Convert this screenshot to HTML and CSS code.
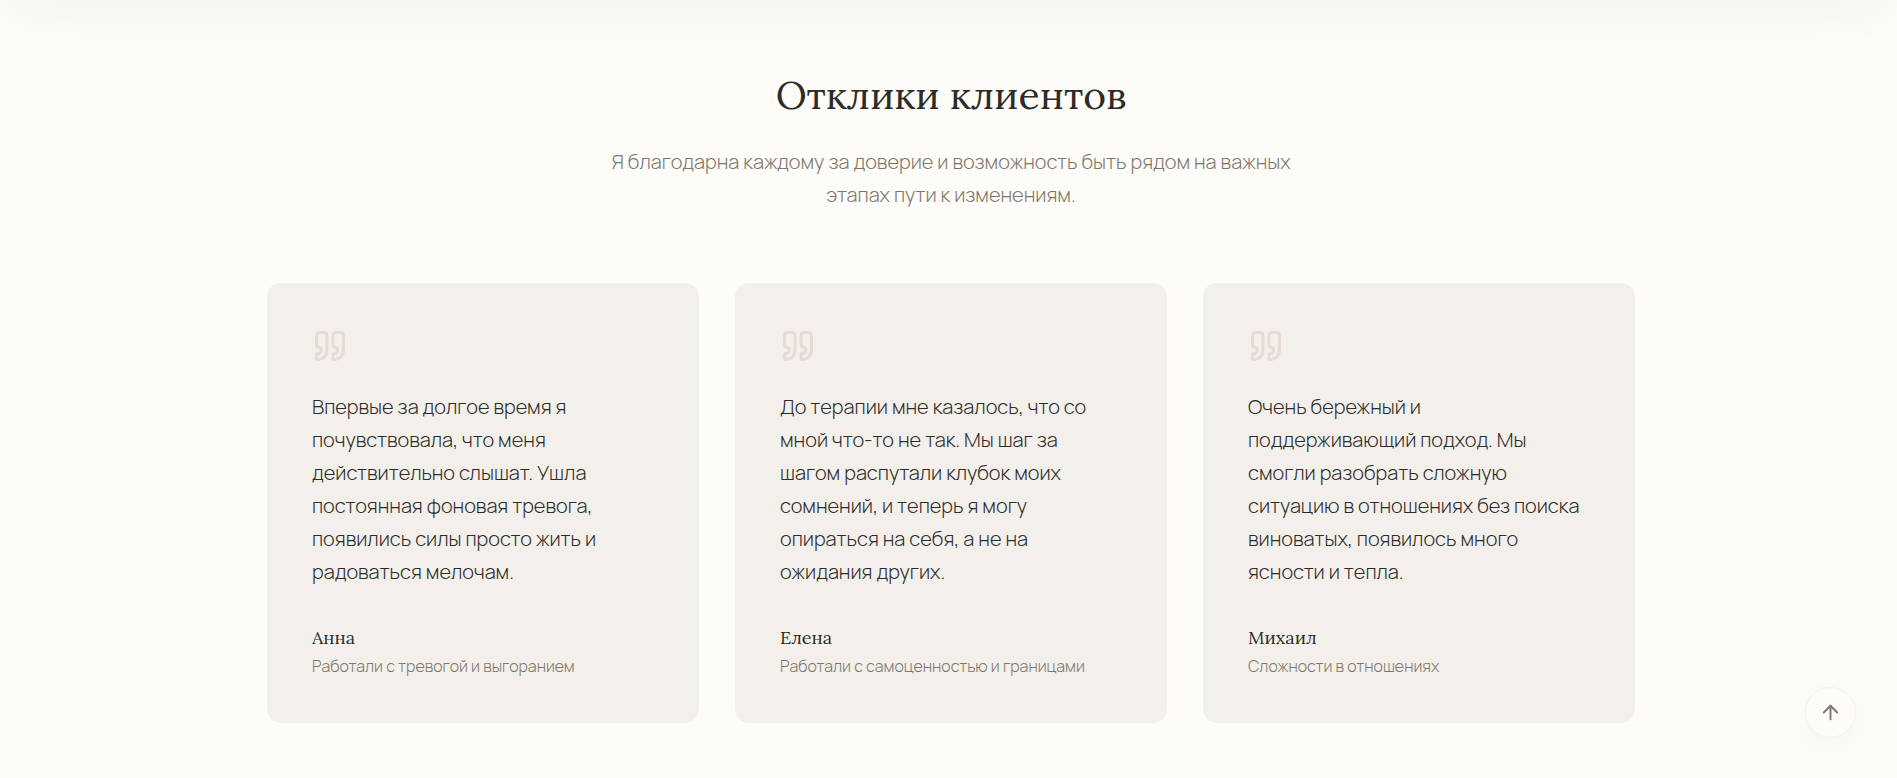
FILE: index.html
```html
<!DOCTYPE html>
<html lang="ru">
<head>
    <meta charset="UTF-8">
    <meta name="viewport" content="width=device-width, initial-scale=1.0">
    <title>Отклики клиентов</title>
    <link rel="stylesheet" href="styles.css">
</head>
<body>
    <main>
        <section class="reviews" id="reviews">
            <header class="reviews-header">
                <h2>Отклики клиентов</h2>
                <p>Я благодарна каждому за доверие и возможность быть рядом на важных этапах пути к изменениям.</p>
            </header>

            <div class="reviews-grid">
                <article class="card">
                    <svg class="quote" viewBox="0 0 24 24" aria-hidden="true">
                        <path d="M16 3a2 2 0 0 0-2 2v6a2 2 0 0 0 2 2 1 1 0 0 1 1 1v1a2 2 0 0 1-2 2 1 1 0 0 0-1 1v2a1 1 0 0 0 1 1 6 6 0 0 0 6-6V5a2 2 0 0 0-2-2z"/>
                        <path d="M5 3a2 2 0 0 0-2 2v6a2 2 0 0 0 2 2 1 1 0 0 1 1 1v1a2 2 0 0 1-2 2 1 1 0 0 0-1 1v2a1 1 0 0 0 1 1 6 6 0 0 0 6-6V5a2 2 0 0 0-2-2z"/>
                    </svg>
                    <p class="text">Впервые за долгое время я почувствовала, что меня действительно слышат. Ушла постоянная фоновая тревога, появились силы просто жить и радоваться мелочам.</p>
                    <h3>Анна</h3>
                    <p class="topic">Работали с тревогой и выгоранием</p>
                </article>

                <article class="card">
                    <svg class="quote" viewBox="0 0 24 24" aria-hidden="true">
                        <path d="M16 3a2 2 0 0 0-2 2v6a2 2 0 0 0 2 2 1 1 0 0 1 1 1v1a2 2 0 0 1-2 2 1 1 0 0 0-1 1v2a1 1 0 0 0 1 1 6 6 0 0 0 6-6V5a2 2 0 0 0-2-2z"/>
                        <path d="M5 3a2 2 0 0 0-2 2v6a2 2 0 0 0 2 2 1 1 0 0 1 1 1v1a2 2 0 0 1-2 2 1 1 0 0 0-1 1v2a1 1 0 0 0 1 1 6 6 0 0 0 6-6V5a2 2 0 0 0-2-2z"/>
                    </svg>
                    <p class="text">До терапии мне казалось, что со мной что-то не так. Мы шаг за шагом распутали клубок моих сомнений, и теперь я могу опираться на себя, а не на ожидания других.</p>
                    <h3>Елена</h3>
                    <p class="topic">Работали с самоценностью и границами</p>
                </article>

                <article class="card">
                    <svg class="quote" viewBox="0 0 24 24" aria-hidden="true">
                        <path d="M16 3a2 2 0 0 0-2 2v6a2 2 0 0 0 2 2 1 1 0 0 1 1 1v1a2 2 0 0 1-2 2 1 1 0 0 0-1 1v2a1 1 0 0 0 1 1 6 6 0 0 0 6-6V5a2 2 0 0 0-2-2z"/>
                        <path d="M5 3a2 2 0 0 0-2 2v6a2 2 0 0 0 2 2 1 1 0 0 1 1 1v1a2 2 0 0 1-2 2 1 1 0 0 0-1 1v2a1 1 0 0 0 1 1 6 6 0 0 0 6-6V5a2 2 0 0 0-2-2z"/>
                    </svg>
                    <p class="text">Очень бережный и поддерживающий подход. Мы смогли разобрать сложную ситуацию в отношениях без поиска виноватых, появилось много ясности и тепла.</p>
                    <h3>Михаил</h3>
                    <p class="topic">Сложности в отношениях</p>
                </article>
            </div>
        </section>
    </main>

    <button type="button" class="to-top" id="toTop" aria-label="Наверх">
        <svg viewBox="0 0 24 24" aria-hidden="true">
            <path d="m5 12 7-7 7 7"/>
            <path d="M12 19V5"/>
        </svg>
    </button>

    <script>
        // Scroll back to the top of the page
        document.getElementById('toTop').addEventListener('click', () => {
            window.scrollTo({ top: 0, behavior: 'smooth' });
        });
    </script>
</body>
</html>
```
FILE: styles.css
```css
* {
    box-sizing: border-box;
}
body {
    font-family: Manrope, Inter, sans-serif;
    font-weight: 300;
    background-color: #fdfcf8;
    color: #2d2b28;
    margin: 0;
}
h2, h3, p {
    margin: 0;
}
h2, h3 {
    font-family: Lora, "Liberation Serif", serif;
    font-weight: 400;
}
.reviews {
    position: relative;
    padding: 70px 24px 54px 29px;
}
/* soft shadow falling from the block above */
.reviews::before {
    content: "";
    position: absolute;
    left: 0;
    right: 0;
    bottom: 100%;
    height: 200px;
    border-radius: 36px;
    box-shadow: 0 12px 60px rgba(51, 49, 46, 0.05);
    pointer-events: none;
}
.reviews-header {
    max-width: 756px;
    margin: 0 auto 72px;
    text-align: center;
}
.reviews-header h2 {
    font-size: 39px;
    line-height: 50px;
    margin-bottom: 25px;
}
.reviews-header p {
    max-width: 720px;
    margin: 0 auto;
    font-size: 20px;
    line-height: 33px;
    color: #7d766b;
}
.reviews-grid {
    display: grid;
    grid-template-columns: repeat(auto-fit, minmax(320px, 1fr));
    gap: 36px;
    max-width: 1368px;
    margin: 0 auto;
}
.card {
    padding: 45px;
    border-radius: 14px;
    background: #f3f0ec;
}
.quote {
    display: block;
    width: 36px;
    height: 36px;
    margin-bottom: 26px;
    fill: none;
    stroke: #e6dad5;
    stroke-width: 2;
    stroke-linecap: round;
    stroke-linejoin: round;
}
.card .text {
    max-width: 340px;
    margin-bottom: 36px;
    font-size: 20px;
    line-height: 33px;
}
.card h3 {
    font-size: 18px;
    line-height: 27px;
}
.card .topic {
    margin-top: 3px;
    font-size: 16px;
    line-height: 24px;
    color: #7d766b;
}
.to-top {
    position: fixed;
    right: 41px;
    bottom: 40px;
    display: flex;
    align-items: center;
    justify-content: center;
    width: 51px;
    height: 51px;
    padding: 0;
    border: 1px solid #f3f0ec;
    border-radius: 50%;
    background: #fdfcf8;
    color: #7d766b;
    box-shadow: 0 10px 50px rgba(51, 49, 46, 0.05);
    cursor: pointer;
}
.to-top svg {
    width: 23px;
    height: 23px;
    fill: none;
    stroke: currentColor;
    stroke-width: 2;
    stroke-linecap: round;
    stroke-linejoin: round;
}
.to-top:hover {
    color: #33312e;
}
```
